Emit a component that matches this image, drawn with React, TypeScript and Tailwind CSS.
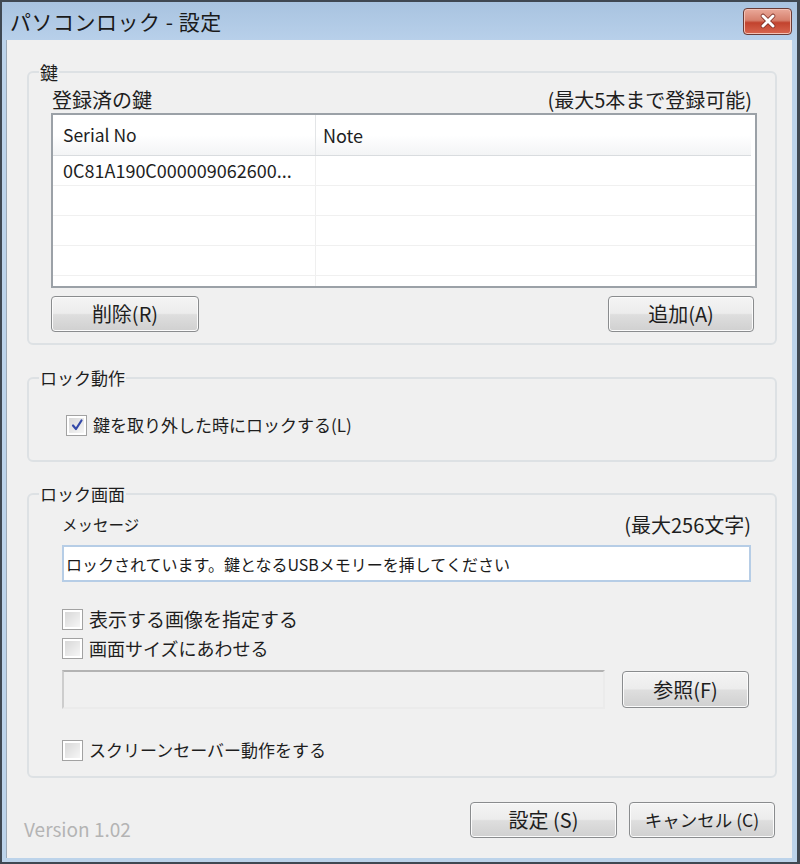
import React from "react";

const btn =
  "h-[36px] rounded-[4px] border border-[#8a8c8e] bg-[linear-gradient(#f4f4f4,#ececec_48%,#dedede_52%,#d0d0d0)] shadow-[inset_0_0_0_1px_#fbfbfb] text-[#1e1e1e] leading-none flex items-center justify-center";

function CheckBox({ checked }: { checked?: boolean }) {
  return (
    <div className="w-[21px] h-[21px] shrink-0 border border-[#a2a2a2] bg-white p-[2px]">
      <div className="w-full h-full bg-[linear-gradient(135deg,#d8d8d8,#f6f6f6)] flex items-center justify-center">
        {checked && (
          <svg width="14" height="14" viewBox="0 0 14 14">
            <path d="M3 7.5 L6 11 L11.5 2.5" fill="none" stroke="#3348a8" strokeWidth="2.2" strokeLinecap="round" strokeLinejoin="round" />
          </svg>
        )}
      </div>
    </div>
  );
}

function CheckRow({ label, checked, size }: { label: string; checked?: boolean; size: string }) {
  return (
    <div className="flex items-center h-[24px] gap-[6px]">
      <CheckBox checked={checked} />
      <span className={size + " leading-[24px] text-[#1e1e1e] whitespace-nowrap"}>{label}</span>
    </div>
  );
}

function Group({ title, children, className, size }: { title: string; children: React.ReactNode; className?: string; size: string }) {
  return (
    <fieldset className={"border-2 border-[#dde1e4] rounded-[6px] pl-[10px] pr-0 " + (className ?? "")}>
      <legend className={"px-[1px] leading-[24px] text-[#1e1e1e] " + size}>{title}</legend>
      {children}
    </fieldset>
  );
}

export default function App() {
  const rows = ["0C81A190C000009062600...", "", "", "", ""];
  return (
    <div className="w-[800px] h-[864px] bg-[#bcd3ea] border-t-2 border-l-2 border-b-2 border-r-[3px] border-[#3f4852] flex flex-col font-['Noto_Sans_CJK_JP',sans-serif] overflow-hidden">
      {/* title bar */}
      <div className="h-[38px] shrink-0 flex items-center justify-between pl-[8px] pr-[5px] bg-[linear-gradient(#a8c3e0,#b8d0ea)]">
        <span className="text-[21px] text-[#1a1a1a] leading-none tracking-[0.5px]">パソコンロック - 設定</span>
        <div className="w-[49px] h-[27px] rounded-[4px] border border-[#6a3b36] bg-[linear-gradient(#eaa99a,#d6806d_45%,#c2432e_55%,#d8664f)] shadow-[inset_0_0_0_1px_#f3c2b6] flex items-center justify-center">
          <svg width="18" height="16" viewBox="0 0 18 16">
            <path d="M4 3 L14 13 M14 3 L4 13" stroke="#7a2a20" strokeWidth="4.5" strokeLinecap="round" />
            <path d="M4 3 L14 13 M14 3 L4 13" stroke="#ffffff" strokeWidth="3" strokeLinecap="round" />
          </svg>
        </div>
      </div>
      {/* client */}
      <div className="ml-[4px] mr-[5px] mb-[4px] h-[818px] border-l border-[#9eabb8] bg-[#f0f0f0] flex flex-col pt-[20px]">
        {/* 鍵 */}
        <Group title="鍵" size="text-[18px]" className="ml-[20px] mr-[15px]">
          <div className="ml-[12px] mr-[18px] flex flex-col pb-[11px]">
            <div className="mt-[4px] h-[24px] flex items-center justify-between pl-[1px] pr-[5px] text-[20px] leading-none text-[#1e1e1e] whitespace-nowrap">
              <span>登録済の鍵</span>
              <span>(最大5本まで登録可能)</span>
            </div>
            <div className="mt-[1px] h-[175px] border-2 border-[#9ba1a7] bg-white overflow-hidden flex flex-col">
              <div className="h-[41px] shrink-0 flex border-b border-[#d9dcdf] bg-[linear-gradient(#ffffff,#ffffff_50%,#f3f4f5)] text-[#1e1e1e] mr-[4px]">
                <div className="w-[263px] border-r border-[#e3e5e7] flex items-center pl-[10px] text-[17.5px]">Serial No</div>
                <div className="flex-1 flex items-center pl-[7px] text-[18px]">Note</div>
              </div>
              {rows.map((r, i) => (
                <div key={i} className="h-[30px] shrink-0 flex border-b border-[#f0f0f0] text-[18px] text-[#1e1e1e]">
                  <div className="w-[263px] border-r border-[#efefef] flex items-center pl-[10px] whitespace-nowrap">{r}</div>
                  <div className="flex-1" />
                </div>
              ))}
            </div>
            <div className="mt-[8px] flex justify-between">
              <button className={btn + " w-[148px] text-[20px]"}>削除(R)</button>
              <button className={btn + " w-[146px] mr-[3px] text-[20px]"}>追加(A)</button>
            </div>
          </div>
        </Group>

        {/* ロック動作 */}
        <Group title="ロック動作" size="text-[17px]" className="ml-[20px] mr-[15px] mt-[21px]">
          <div className="ml-[27px] mt-[23px] pb-[23px]">
            <CheckRow label="鍵を取り外した時にロックする(L)" checked size="text-[17px]" />
          </div>
        </Group>

        {/* ロック画面 */}
        <Group title="ロック画面" size="text-[17px]" className="ml-[20px] mr-[15px] mt-[20px]">
          <div className="ml-[23px] mr-[24px] flex flex-col pb-[14px]">
            <div className="mt-[7px] h-[24px] flex items-center justify-between text-[#1e1e1e] whitespace-nowrap">
              <span className="text-[15.5px]">メッセージ</span>
              <span className="text-[20px] leading-none">(最大256文字)</span>
            </div>
            <div className="mt-[8px] h-[37px] border-2 border-[#b6cde6] bg-white flex items-center pl-[2px] text-[16px] text-[#1a1a1a] whitespace-nowrap overflow-hidden">
              ロックされています。鍵となるUSBメモリーを挿してください
            </div>
            <div className="mt-[25px]">
              <CheckRow label="表示する画像を指定する" size="text-[19px]" />
            </div>
            <div className="mt-[5px]">
              <CheckRow label="画面サイズにあわせる" size="text-[18px]" />
            </div>
            <div className="mt-[10px] flex items-center">
              <div className="w-[543px] h-[39px] border-2 border-t-[#b3b3b3] border-l-[#cdcdcd] border-r-[#ebebeb] border-b-[#ebebeb] bg-[#f0f0f0]" />
              <button className={btn + " w-[127px] ml-[17px] h-[37px] text-[20px]"}>参照(F)</button>
            </div>
            <div className="mt-[29px]">
              <CheckRow label="スクリーンセーバー動作をする" size="text-[17px]" />
            </div>
          </div>
        </Group>

        {/* bottom */}
        <div className="mt-[24px] h-[36px] flex items-center ml-[17px] mr-[17px]">
          <span className="text-[19px] leading-none text-[#b4b4b4] mt-[16px]">Version 1.02</span>
          <div className="flex-1" />
          <button className={btn + " w-[147px] text-[20px]"}>設定 (S)</button>
          <button className={btn + " w-[146px] ml-[12px] text-[17.5px]"}>キャンセル (C)</button>
        </div>
      </div>
    </div>
  );
}
